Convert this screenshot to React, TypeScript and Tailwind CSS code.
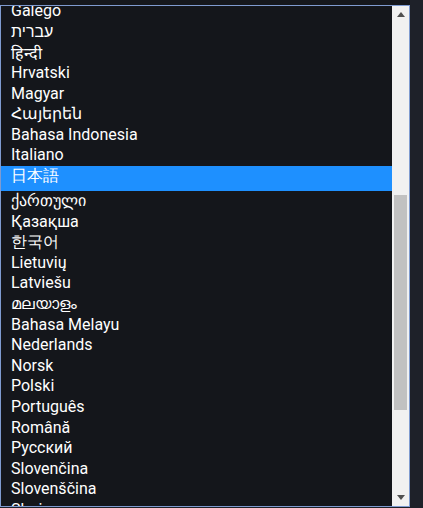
import { useEffect, useRef } from 'react'

const languages = [
  'Afrikaans',
  'العربية',
  'Azərbaycan',
  'Беларуская',
  'Български',
  'বাংলা',
  'Català',
  'Čeština',
  'Dansk',
  'Deutsch',
  'Ελληνικά',
  'English',
  'Español',
  'Eesti',
  'Euskara',
  'فارسی',
  'Suomi',
  'Français',
  'Gaeilge',
  'Galego',
  'עברית',
  'हिन्दी',
  'Hrvatski',
  'Magyar',
  'Հայերեն',
  'Bahasa Indonesia',
  'Italiano',
  '日本語',
  'ქართული',
  'Қазақша',
  '한국어',
  'Lietuvių',
  'Latviešu',
  'മലയാളം',
  'Bahasa Melayu',
  'Nederlands',
  'Norsk',
  'Polski',
  'Português',
  'Română',
  'Русский',
  'Slovenčina',
  'Slovenščina',
  'Shqip',
  'Српски',
  'Svenska',
  'தமிழ்',
  'ไทย',
  'Türkçe',
  'Українська',
  'Tiếng Việt',
  '简体中文',
  '繁體中文',
]

const selected = '日本語'

function Arrow({ down }: { down?: boolean }) {
  return (
    <div className="flex h-[17px] items-center justify-center">
      <svg width="8" height="5" viewBox="0 0 8 5" className={down ? 'rotate-180' : ''}>
        <path d="M4 0 L8 5 L0 5 Z" fill="#505050" />
      </svg>
    </div>
  )
}

export default function App() {
  const listRef = useRef<HTMLDivElement>(null)
  const anchorRef = useRef<HTMLDivElement>(null)

  // keep the list scrolled so Hrvatski sits where the screenshot has it
  useEffect(() => {
    if (listRef.current && anchorRef.current) {
      listRef.current.scrollTop = anchorRef.current.offsetTop - 57
    }
  }, [])

  return (
    <div className="min-h-screen bg-[#1e2129] font-['Roboto',sans-serif]">
      <div className="h-[5px] w-[410px] bg-[#15171c]" />
      <div className="flex h-[502px] w-[410px] border border-[#7f9bd0] bg-[#14161b]">
        <div
          ref={listRef}
          className="relative flex-1 overflow-hidden text-base leading-[normal] text-white"
        >
          {languages.map(lang => (
            <div
              key={lang}
              ref={lang === 'Hrvatski' ? anchorRef : undefined}
              className={
                lang === selected
                  ? 'h-[25px] overflow-hidden whitespace-nowrap bg-[#1e90ff] pr-[2px] pl-[10px]'
                  : 'h-[20.6px] whitespace-nowrap pr-[2px] pl-[10px]'
              }
            >
              {lang}
            </div>
          ))}
        </div>
        <div className="flex w-[17px] flex-col bg-[#f1f1f1]">
          <Arrow />
          <div className="h-[172px]" />
          <div className="mx-[2px] h-[215px] bg-[#c1c1c1]" />
          <div className="flex-1" />
          <Arrow down />
        </div>
      </div>
    </div>
  )
}
